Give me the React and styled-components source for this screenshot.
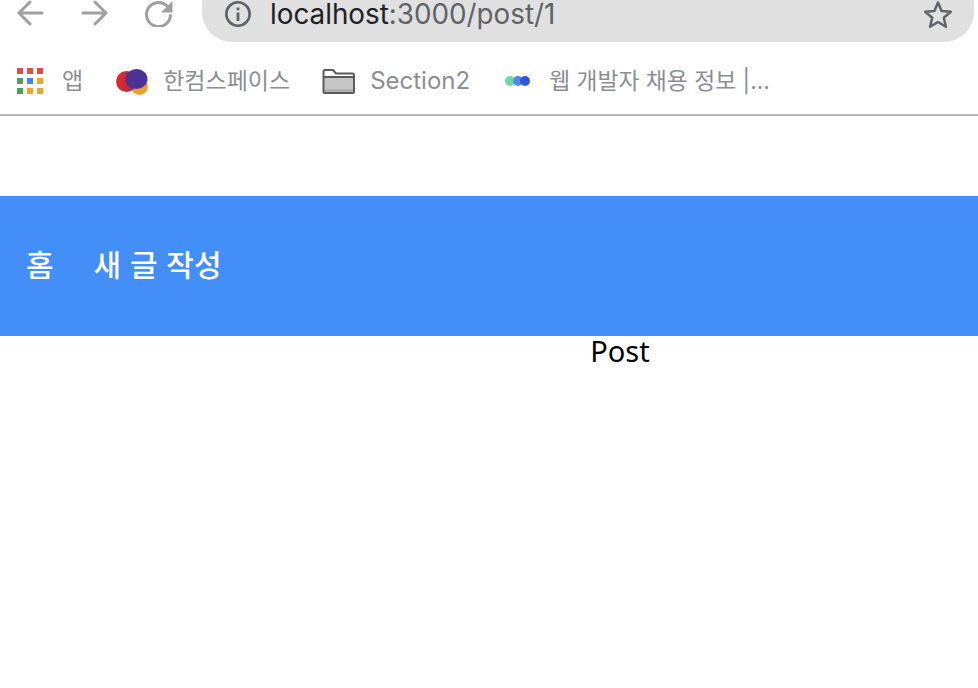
import React from "react";
import styled, { createGlobalStyle } from "styled-components";

const GlobalStyle = createGlobalStyle`
  html, body {
    margin: 0;
    padding: 0;
    background: #fff;
  }
`;

const Toolbar = styled.div`
  display: flex;
  height: 42px;
  padding: 0 4px 0 17px;
`;

const NavIcons = styled.div`
  display: flex;
  align-items: flex-start;
  gap: 37px;
  width: 185px;
  flex-shrink: 0;
`;

const UrlPill = styled.div`
  flex: 1;
  display: flex;
  align-items: flex-start;
  padding: 0 21px 0 23px;
  background: #e0e0e0;
  border-radius: 0 0 30px 30px;
`;

const UrlText = styled.div`
  flex: 1;
  margin-left: 19px;
  font-family: "Inter", "Liberation Sans", sans-serif;
  font-size: 27.8px;
  line-height: 28px;
  color: #5f6368;
  white-space: nowrap;
`;

const Host = styled.span`
  color: #202124;
`;

const Bookmarks = styled.div`
  display: flex;
  align-items: center;
  height: 74px;
  padding: 6px 0 0 17px;
  box-sizing: border-box;
  border-bottom: 2px solid #b4b4b4;
`;

const Bookmark = styled.div`
  display: flex;
  align-items: center;
  gap: ${(p) => p.$gap}px;
  margin-right: ${(p) => p.$right || 0}px;
  font-family: "Inter", "Noto Sans CJK KR", sans-serif;
  font-size: ${(p) => p.$size || 23}px;
  line-height: 30px;
  color: #8b8e92;
  white-space: nowrap;
`;

const Spacer = styled.div`
  height: 80px;
`;

const Nav = styled.nav`
  display: flex;
  align-items: center;
  gap: 40px;
  height: 140px;
  padding: 0 0 6px 26px;
  box-sizing: border-box;
  background: #448ef7;
`;

const NavLink = styled.a`
  font-family: "Noto Sans CJK KR", sans-serif;
  font-size: 30px;
  font-weight: 500;
  word-spacing: 2px;
  color: #fff;
`;

const Main = styled.main`
  padding-left: 262px;
  text-align: center;
  font-family: "Noto Sans", "Open Sans", sans-serif;
  font-size: 29px;
  line-height: 29px;
  color: #000;
`;

const Back = () => (
  <svg width="27" height="26" viewBox="0 0 27 26" fill="none" stroke="#a0a0a0" strokeWidth="3" strokeLinecap="round" strokeLinejoin="round">
    <path d="M25 13H2M13 2 2 13l11 11" />
  </svg>
);

const Forward = () => (
  <svg width="27" height="26" viewBox="0 0 27 26" fill="none" stroke="#a0a0a0" strokeWidth="3" strokeLinecap="round" strokeLinejoin="round">
    <path d="M2 13h23M14 2l11 11-11 11" />
  </svg>
);

const Reload = () => (
  <svg width="28" height="27" viewBox="0 0 28 27" fill="none">
    <path d="M21.500 5.500A12 12 0 1 0 25.500 15.500" stroke="#a0a0a0" strokeWidth="3" strokeLinecap="round" />
    <path d="M27.500 1v11.500H16z" fill="#a0a0a0" />
  </svg>
);

const Info = () => (
  <svg width="26" height="28" viewBox="0 0 26 28" fill="none" style={{ flexShrink: 0 }}>
    <circle cx="13" cy="14" r="11.700" stroke="#5f6368" strokeWidth="2.600" />
    <rect x="11.600" y="7.500" width="2.800" height="2.800" fill="#5f6368" />
    <rect x="11.600" y="12.500" width="2.800" height="8.500" fill="#5f6368" />
  </svg>
);

const Star = () => (
  <svg width="30" height="29" viewBox="0 0 30 29" fill="none" style={{ flexShrink: 0 }}>
    <path d="M15 2.500 18.600 11l9.200.8-7 6 2.100 9L15 22l-7.900 4.800 2.100-9-7-6 9.200-.8z" stroke="#5f6368" strokeWidth="2.500" strokeLinejoin="round" />
  </svg>
);

const appColors = ["#e34d3e", "#e34d3e", "#e34d3e", "#4f9d5d", "#4285f4", "#e9a631", "#4f9d5d", "#e9a631", "#e9a631"];

const Apps = () => (
  <svg width="26" height="26" viewBox="0 0 26 26">
    {appColors.map((c, i) => (
      <rect key={i} x={(i % 3) * 10} y={Math.floor(i / 3) * 10} width="6" height="6" fill={c} />
    ))}
  </svg>
);

const Hancom = () => (
  <svg width="33" height="29" viewBox="0 0 33 29">
    <defs>
      <filter id="soft" x="-10%" y="-10%" width="120%" height="120%">
        <feGaussianBlur stdDeviation="0.5" />
      </filter>
      <linearGradient id="redPurple" x1="0" x2="1" y1="0" y2="0">
        <stop offset="0.3" stopColor="#d92b30" />
        <stop offset="0.9" stopColor="#7a2f70" />
      </linearGradient>
    </defs>
    <g filter="url(#soft)">
      <circle cx="23.500" cy="19.500" r="8.500" fill="#e9a030" />
      <circle cx="10.500" cy="14.500" r="10.500" fill="url(#redPurple)" />
      <ellipse cx="20.500" cy="12" rx="11" ry="10" fill="#4e3095" />
    </g>
  </svg>
);

const Folder = () => (
  <svg width="33" height="27" viewBox="0 0 33 27">
    <path d="M1.500 9h30v15a1 1 0 0 1-1 1h-28a1 1 0 0 1-1-1z" fill="#c6c6c6" />
    <path d="M2 22.500h29" stroke="#a8a8a8" strokeWidth="2" />
    <path d="M1.500 24V3.500A1.500 1.500 0 0 1 3 2h8l3 3.500h16.500A1.500 1.500 0 0 1 32 7v17a1 1 0 0 1-1 1H2.500a1 1 0 0 1-1-1z" stroke="#5a5a5a" strokeWidth="2" fill="none" />
    <path d="M2 9h29.500" stroke="#5a5a5a" strokeWidth="2" />
  </svg>
);

const Dots = () => (
  <svg width="27" height="12" viewBox="0 0 27 12">
    <circle cx="6" cy="6" r="5" fill="#6bd9a6" />
    <circle cx="14" cy="6" r="5" fill="#5583f0" />
    <circle cx="21" cy="6" r="5" fill="#2f54e0" />
  </svg>
);

const App = () => {
  return (
    <>
      <GlobalStyle />
      <Toolbar>
        <NavIcons>
          <Back />
          <Forward />
          <Reload />
        </NavIcons>
        <UrlPill>
          <Info />
          <UrlText>
            <Host>localhost</Host>:3000/post/1
          </UrlText>
          <Star />
        </UrlPill>
      </Toolbar>
      <Bookmarks>
        <Bookmark $gap={19} $right={33}>
          <Apps />
          앱
        </Bookmark>
        <Bookmark $gap={14} $right={32}>
          <Hancom />
          한컴스페이스
        </Bookmark>
        <Bookmark $gap={15} $right={34} $size={24}>
          <Folder />
          Section2
        </Bookmark>
        <Bookmark $gap={18} $size={22.800}>
          <Dots />
          웹 개발자 채용 정보 |...
        </Bookmark>
      </Bookmarks>
      <Spacer />
      <Nav>
        <NavLink>홈</NavLink>
        <NavLink>새 글 작성</NavLink>
      </Nav>
      <Main>Post</Main>
    </>
  );
};

export default App;
